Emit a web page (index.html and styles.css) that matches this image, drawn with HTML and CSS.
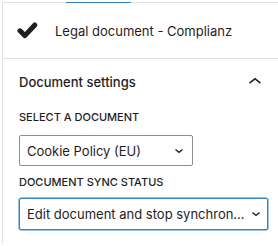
FILE: index.html
```html
<!DOCTYPE html>
<html lang="en">
<head>
    <meta charset="UTF-8">
    <meta name="viewport" content="width=device-width, initial-scale=1.0">
    <title>Document settings</title>
    <link rel="stylesheet" href="styles.css">
</head>
<body>

    <div class="sidebar">
        <!-- tab indicator -->
        <div class="tab-line"><span class="tab-active"></span></div>

        <div class="doc-header">
            <svg class="check-icon" width="21" height="17" viewBox="0 0 21 17">
                <path d="M3 8.8 L7.9 13.6 L17.8 3" fill="none" stroke="#1e1e1e" stroke-width="5" stroke-linejoin="round" stroke-linecap="round"/>
            </svg>
            <span class="doc-title">Legal document - Complianz</span>
        </div>

        <div class="panel">
            <div class="panel-head">
                <span>Document settings</span>
                <svg width="26" height="26" viewBox="0 0 24 24">
                    <path d="M6.5 12.4L12 8l5.5 4.4-.9 1.2L12 10l-4.6 3.6-.9-1.2z" fill="#1e1e1e"/>
                </svg>
            </div>

            <label class="field-label">Select a document</label>
            <div class="select small">
                <span class="select-text">Cookie Policy (EU)</span>
                <svg width="10" height="6" viewBox="0 0 10 6"><path d="M1.5 1.5 L5 4.3 L8.5 1.5" fill="none" stroke="#1e1e1e" stroke-width="1.3"/></svg>
            </div>

            <label class="field-label">Document sync status</label>
            <div class="select wide focused">
                <span class="select-text">Edit document and stop synchron...</span>
                <svg width="10" height="6" viewBox="0 0 10 6"><path d="M1.5 1.5 L5 4.3 L8.5 1.5" fill="none" stroke="#1e1e1e" stroke-width="1.3"/></svg>
            </div>
        </div>
    </div>

</body>
</html>
```

FILE: styles.css
```css
body {
    margin: 0;
    background: #fff;
    font-family: Inter, "Noto Sans", sans-serif;
    color: #1e1e1e;
    overflow: hidden;
}

.sidebar {
    margin: 2px 0 0 2px;
    border-left: 1px solid #e0e0e0;
    height: 242px;
}

.tab-line {
    display: flex;
    height: 1px;
    background: #e0e0e0;
}

.tab-active {
    margin-left: 63px;
    width: 65px;
    background: #3582c4;
}

.doc-header {
    display: flex;
    align-items: center;
    height: 55px;
    border-bottom: 1px solid #e0e0e0;
    padding-left: 14px;
}

.check-icon {
    margin-right: 17px;
}

.doc-title {
    font-size: 13px;
}

.panel {
    display: flex;
    flex-direction: column;
    align-items: flex-start;
    padding: 0 10px 14px 16px;
    border-bottom: 1px solid #e0e0e0;
}

.panel-head {
    align-self: stretch;
    display: flex;
    justify-content: space-between;
    align-items: center;
    height: 46px;
    font-size: 13px;
    font-weight: 500;
}

.field-label {
    font-size: 11px;
    line-height: 13px;
    font-weight: 500;
    text-transform: uppercase;
    margin-top: 6px;
    margin-bottom: 9px;
}

.select {
    display: flex;
    align-items: center;
    justify-content: space-between;
    box-sizing: border-box;
    height: 31px;
    padding: 0 8px 0 7px;
    border: 1px solid #8c8f94;
    border-radius: 2px;
    font-size: 13px;
}

.select.small {
    width: 174px;
    margin-top: 2px;
    margin-bottom: 4px;
}

.select.wide {
    align-self: stretch;
    height: 32px;
}

.select.focused {
    border-color: #3582c4;
    box-shadow: 0 0 0 0.5px #3582c4;
}

.select-text {
    white-space: nowrap;
    margin-right: 6px;
}

.select svg {
    flex-shrink: 0;
}
```
